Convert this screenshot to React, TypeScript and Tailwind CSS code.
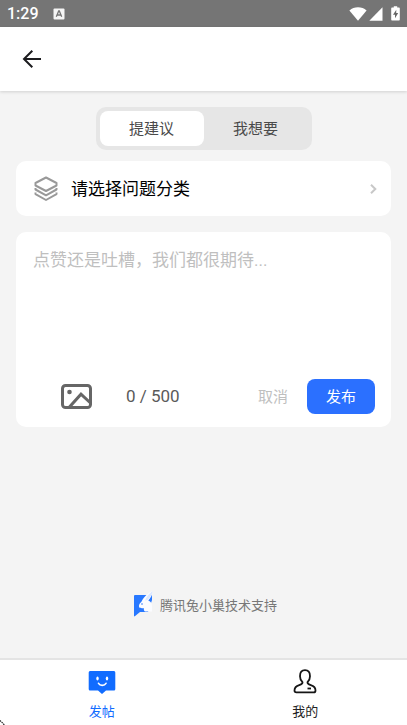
import { useState } from 'react'

const MAX_LENGTH = 500

function StatusBar() {
  return (
    <div className="flex h-[27px] shrink-0 items-center bg-[#757575] px-[7px] text-white">
      <span className="pt-px font-[Roboto,sans-serif] text-base font-medium leading-5">1:29</span>
      <svg className="ml-[14px] h-3 w-3" viewBox="0 0 12 12" aria-hidden="true">
        <rect x="0.5" y="0.5" width="11" height="11" rx="1" fill="#f5f5f5" />
        <path d="M3.3 8.8 5.7 3h.6l2.4 5.8M4.3 7h3.4" fill="none" stroke="#757575" strokeWidth="1.3" />
      </svg>
      <svg className="ml-auto h-[14px] w-[18px]" viewBox="0 0 18 14" fill="#fff" aria-hidden="true">
        <path d="M9 13.8.4 3.4C2.8 1.2 5.8.2 9 .2s6.2 1 8.6 3.2z" />
      </svg>
      <svg className="ml-[2px] h-[14px] w-[14px]" viewBox="0 0 14 14" fill="#fff" aria-hidden="true">
        <path d="M13.500.3v13.400H.3z" />
      </svg>
      <svg className="ml-2 h-[15px] w-[9px]" viewBox="0 0 9 15" aria-hidden="true">
        <path d="M1 1.600h1.800V.3h3.400v1.300H8q.8 0 .8.8v11.200q0 .9-.8.9H1q-.8 0-.8-.9V2.400q0-.8.8-.8z" fill="#fff" />
        <path d="M5.300 3.800 2 8.800h2v3.400l3.200-5.100h-2z" fill="#666" />
      </svg>
    </div>
  )
}

function BackIcon() {
  return (
    <svg className="h-5 w-5" viewBox="0 0 20 20" fill="none" stroke="#1c1c1f" strokeWidth="2" aria-hidden="true">
      <path d="M19 10H2.200M10.300 1.700 2 10l8.300 8.300" />
    </svg>
  )
}

function LayersIcon() {
  return (
    <svg
      className="h-[26px] w-6 shrink-0"
      viewBox="0 0 24 26"
      fill="none"
      stroke="#999"
      strokeWidth="2"
      strokeLinejoin="round"
      aria-hidden="true"
    >
      <path d="M12 1.500 22.500 7v2.500L12 15 1.500 9.500V7z" />
      <path d="M1.500 12v1.500L12 19.300l10.500-5.800V12" />
      <path d="M1.500 16.600v1.500L12 24l10.500-5.900v-1.500" />
    </svg>
  )
}

function ImageIcon() {
  return (
    <svg className="h-[25px] w-[31px]" viewBox="0 0 31 25" fill="none" stroke="#666" aria-hidden="true">
      <rect x="1.500" y="1.500" width="28" height="22" rx="3" strokeWidth="3" />
      <circle cx="8.500" cy="8" r="2.300" fill="#666" stroke="none" />
      <path d="M8 23.500 20 10.200l9.500 8.800" strokeWidth="3" />
    </svg>
  )
}

function RabbitLogo() {
  return (
    <svg className="h-[26px] w-5" viewBox="0 0 20 26" aria-hidden="true">
      <path d="M2 4h17v5l-4 12H7l-5.500 4.500L1 25V5q0-1 1-1z" fill="#2878ff" />
      <path d="M8.300 11C9.800 7.500 13.500 2.500 19.500 0c.2 3.500-2 7-4.200 9.500 2.700 1 3.700 3 3.700 6v5h-7c-1-.5-1.200-2-1.300-3.500-1.500.3-3.800.3-4.500-.7-.8-1.300.4-4.300 2.100-5.300z" fill="#fbfcff" />
      <path d="M12 9.500C13.300 6 16 3 19.500 0c.2 3.300-2.500 6.500-5 9z" fill="#dce8ff" />
      <circle cx="9" cy="13" r="0.800" fill="#2878ff" />
    </svg>
  )
}

function PostIcon() {
  return (
    <svg className="h-[26px] w-7" viewBox="0 0 28 26" aria-hidden="true">
      <path d="M2 2h24q1.300 0 1.300 1.500V20q0 1.500-1.300 1.500h-8L14 25l-4-3.500H2Q.7 21.500.7 20V3.500Q.7 2 2 2z" fill="#116cff" />
      <ellipse cx="9.500" cy="9.500" rx="1.200" ry="2" fill="#fff" />
      <ellipse cx="19" cy="9.500" rx="1.200" ry="2" fill="#fff" />
      <path d="M10.500 14.300c1.600 2.700 5.900 2.700 7.500 0" fill="none" stroke="#fff" strokeWidth="1.600" strokeLinecap="round" />
    </svg>
  )
}

function MineIcon() {
  return (
    <svg className="h-[26px] w-7" viewBox="0 0 28 26" fill="none" stroke="#151515" strokeWidth="1.800" strokeLinejoin="round" aria-hidden="true">
      <path d="M11.500 13.200C9.700 11.600 9 9.500 9 7.200c0-3.600 2-6 5-6s5 2.400 5 6c0 2.300-.7 4.400-2.500 6-.3 1.600 1 2.200 3.300 2.900 3.200 1 4.700 2.300 4.700 5.300 0 1.300-.6 2-1.900 2H5.400c-1.300 0-1.900-.7-1.900-2 0-3 1.500-4.300 4.700-5.300 2.300-.7 3.600-1.300 3.300-2.900z" />
      <path d="M16.500 19.500h3.500" />
    </svg>
  )
}

export default function App() {
  const [tab, setTab] = useState('suggest')
  const [content, setContent] = useState('')

  const tabs = [
    { id: 'suggest', label: '提建议' },
    { id: 'want', label: '我想要' },
  ]

  return (
    <div className="relative flex min-h-screen flex-col overflow-hidden bg-[#f4f4f4] font-[Roboto,'Noto_Sans_CJK_SC',sans-serif]">
      <StatusBar />

      <header className="flex h-16 shrink-0 items-center bg-white px-[22px] shadow-[0_1px_3px_rgba(0,0,0,0.15)]">
        <button type="button" aria-label="返回">
          <BackIcon />
        </button>
      </header>

      <main className="flex flex-1 flex-col px-4 pt-4">
        <div className="flex self-center rounded-[10px] bg-[#e6e6e6] p-1">
          {tabs.map((item) => (
            <button
              key={item.id}
              type="button"
              aria-pressed={tab === item.id}
              onClick={() => setTab(item.id)}
              className={`h-[35px] w-[104px] rounded-lg pt-px text-[15px] text-[#4a4a4a] ${
                tab === item.id ? 'bg-white' : ''
              }`}
            >
              {item.label}
            </button>
          ))}
        </div>

        <button type="button" className="mt-[11px] flex h-[55px] items-center rounded-[10px] bg-white pl-[18px] pr-[14px]">
          <LayersIcon />
          <span className="ml-[13px] text-[17px] leading-6 text-black">请选择问题分类</span>
          <svg className="ml-auto h-[10px] w-[7px]" viewBox="0 0 7 10" fill="none" stroke="#c8c8c8" strokeWidth="2" aria-hidden="true">
            <path d="m1 .8 4.300 4.200L1 9.200" />
          </svg>
        </button>

        <section className="mt-4 flex flex-col rounded-[10px] bg-white pb-[13px] pl-[17px] pr-4 pt-4">
          <textarea
            aria-label="反馈内容"
            value={content}
            maxLength={MAX_LENGTH}
            onChange={(e) => setContent(e.target.value)}
            placeholder="点赞还是吐槽，我们都很期待..."
            className="h-[131px] w-full resize-none text-[17px] leading-6 text-[#333] outline-none placeholder:text-[#bfbfbf]"
          />
          <div className="flex h-[35px] items-center">
            <button type="button" aria-label="添加图片" className="ml-7">
              <ImageIcon />
            </button>
            <span className="ml-[34px] text-[17px] text-[#5a5a5a]">
              {content.length} / {MAX_LENGTH}
            </span>
            <button type="button" className="ml-auto pt-px text-[15px] text-[#bfbfbf]" onClick={() => setContent('')}>
              取消
            </button>
            <button type="button" className="ml-[19px] h-[35px] w-[68px] rounded-lg bg-[#2b70ff] pt-px text-[15px] text-white">
              发布
            </button>
          </div>
        </section>

        <div className="mt-auto flex items-center justify-center gap-[7px] pb-[41px] pl-[3px]">
          <RabbitLogo />
          <span className="pt-1 text-[13px] leading-5 text-[#777]">腾讯兔小巢技术支持</span>
        </div>
      </main>

      <nav className="flex h-[67px] shrink-0 border-t-2 border-[#e4e4e4] bg-white">
        <a href="#post" className="flex flex-1 flex-col items-center pt-[9px] text-[13px] leading-5 text-[#116cff]">
          <PostIcon />
          <span className="mt-[7px]">发帖</span>
        </a>
        <a href="#mine" className="flex flex-1 flex-col items-center pt-[9px] text-[13px] leading-5 text-[#222]">
          <MineIcon />
          <span className="mt-[7px]">我的</span>
        </a>
      </nav>

      <svg className="absolute bottom-0 left-0 h-[5px] w-[5px]" viewBox="0 0 5 5" aria-hidden="true">
        <path d="M0 0.500 4.500 5" stroke="#222" strokeWidth="1.200" strokeDasharray="1.500 0.800" />
      </svg>
    </div>
  )
}
